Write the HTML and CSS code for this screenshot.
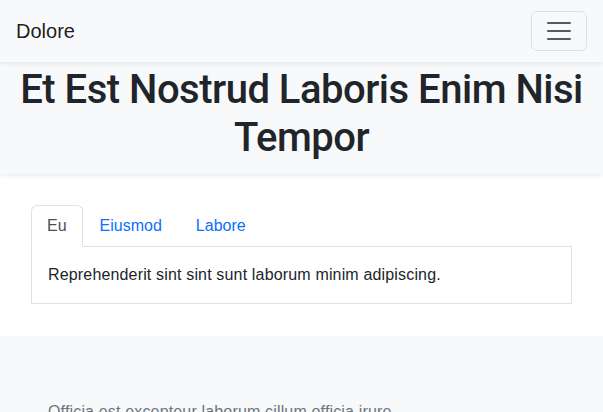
FILE: index.html
```html
<!DOCTYPE html>
<html lang="en">
<head>
<meta charset="utf-8">
<title>Dolore</title>
<link rel="stylesheet" href="styles.css">
</head>
<body>
<nav class="navbar">
  <a class="brand" href="#">Dolore</a>
  <button class="toggler" type="button" aria-label="Toggle navigation">
    <svg class="toggler-icon" viewBox="0 0 30 30" width="30" height="30"><path stroke="rgba(33,37,41,0.75)" stroke-linecap="round" stroke-miterlimit="10" stroke-width="2" d="M4 7h22M4 15h22M4 23h22"/></svg>
  </button>
</nav>
<header class="hero">
  <h1 class="hero-title">Et Est Nostrud Laboris Enim Nisi Tempor</h1>
</header>
<section class="tabs-section">
  <ul class="tabs">
    <li><a class="tab active" href="#">Eu</a></li>
    <li><a class="tab" href="#">Eiusmod</a></li>
    <li><a class="tab" href="#">Labore</a></li>
  </ul>
  <div class="tab-pane">Reprehenderit sint sint sunt laborum minim adipiscing.</div>
</section>
<section class="lower">
  <p class="lower-text">Officia est excepteur laborum cillum officia irure.</p>
</section>
</body>
</html>
```
FILE: styles.css
```css
* { box-sizing: border-box; }
html, body { margin: 0; padding: 0; }
body {
  font-family: "Liberation Sans", Arial, sans-serif;
  font-size: 16px;
  line-height: 1.5;
  color: #212529;
  background: #fff;
}
a { text-decoration: none; }
.navbar {
  position: relative;
  z-index: 2;
  display: flex;
  align-items: center;
  justify-content: space-between;
  padding: 11px 16px;
  background: #f8f9fa;
  box-shadow: 0 2px 4px rgba(0,0,0,0.075);
}
.brand {
  font-size: 20px;
  line-height: 30px;
  color: rgba(0,0,0,0.9);
}
.toggler {
  display: flex;
  align-items: center;
  justify-content: center;
  width: 56px;
  height: 40px;
  padding: 4px 12px;
  background: transparent;
  border: 1px solid rgba(0,0,0,0.1);
  border-radius: 6px;
}
.toggler-icon { display: block; }
.hero {
  position: relative;
  z-index: 1;
  background: #f8f9fa;
  padding: 4px 16px 12px;
  box-shadow: 0 2px 4px rgba(0,0,0,0.075);
}
.hero-title {
  margin: 0;
  text-align: center;
  font-family: Roboto, "Liberation Sans", sans-serif;
  font-size: 40px;
  font-weight: 500;
  line-height: 1.2;
  letter-spacing: -0.5px;
}
.tabs-section {
  padding: 31px 31px 32px;
  background: #fff;
}
.tabs {
  display: flex;
  list-style: none;
  margin: 0;
  padding: 0;
  border-bottom: 1px solid #dee2e6;
}
.tab {
  display: block;
  margin-bottom: -1px;
  padding: 8px 16px;
  line-height: 24px;
  color: #0d6efd;
  border: 1px solid transparent;
  border-radius: 6px 6px 0 0;
}
.tab.active {
  padding: 8px 15px;
  color: #495057;
  background: #fff;
  border-color: #dee2e6 #dee2e6 #fff;
}
.tab-pane {
  padding: 16px;
  border: 1px solid #dee2e6;
  border-top: 0;
  letter-spacing: 0.16px;
}
.lower {
  background: #f8f9fa;
  padding: 64px 48px;
}
.lower-text {
  margin: 0;
  color: #6c757d;
  letter-spacing: 0.16px;
}
```
